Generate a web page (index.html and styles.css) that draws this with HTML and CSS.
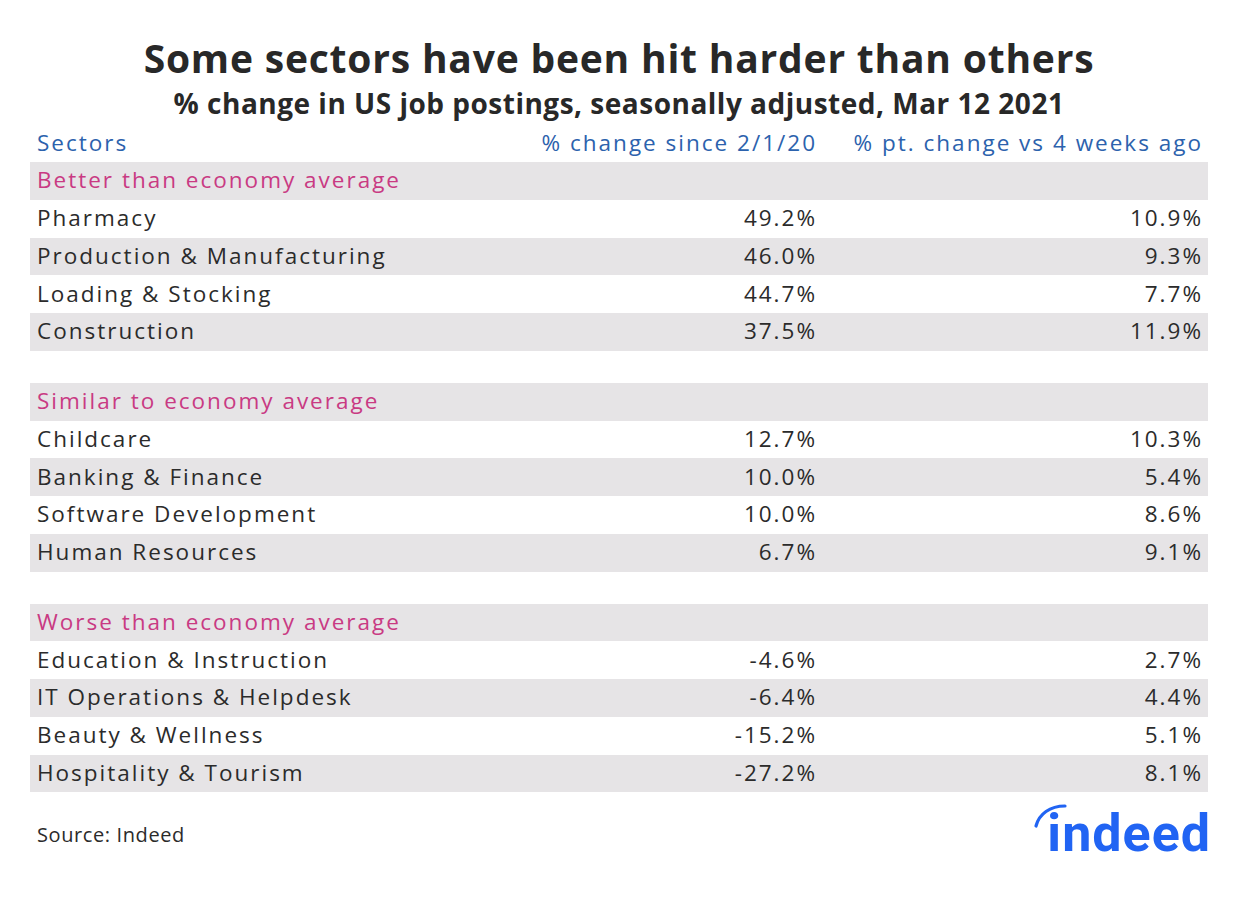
FILE: index.html
```html
<!DOCTYPE html>
<html>
<head>
<meta charset="utf-8">
<link rel="stylesheet" href="styles.css">
</head>
<body>
<div class="chart">
  <h1 class="title">Some sectors have been hit harder than others</h1>
  <h2 class="subtitle">% change in US job postings, seasonally adjusted, Mar 12 2021</h2>
  <div class="table">
    <div class="row head"><span>Sectors</span><span class="num">% change since 2/1/20</span><span class="num">% pt. change vs 4 weeks ago</span></div>

    <div class="row group shade"><span>Better than economy average</span><span></span><span></span></div>
    <div class="row"><span>Pharmacy</span><span class="num">49.2%</span><span class="num">10.9%</span></div>
    <div class="row shade"><span>Production &amp; Manufacturing</span><span class="num">46.0%</span><span class="num">9.3%</span></div>
    <div class="row"><span>Loading &amp; Stocking</span><span class="num">44.7%</span><span class="num">7.7%</span></div>
    <div class="row shade"><span>Construction</span><span class="num">37.5%</span><span class="num">11.9%</span></div>
    <div class="spacer"></div>

    <div class="row group shade"><span>Similar to economy average</span><span></span><span></span></div>
    <div class="row"><span>Childcare</span><span class="num">12.7%</span><span class="num">10.3%</span></div>
    <div class="row shade"><span>Banking &amp; Finance</span><span class="num">10.0%</span><span class="num">5.4%</span></div>
    <div class="row"><span>Software Development</span><span class="num">10.0%</span><span class="num">8.6%</span></div>
    <div class="row shade"><span>Human Resources</span><span class="num">6.7%</span><span class="num">9.1%</span></div>
    <div class="spacer"></div>

    <div class="row group shade"><span>Worse than economy average</span><span></span><span></span></div>
    <div class="row"><span>Education &amp; Instruction</span><span class="num">-4.6%</span><span class="num">2.7%</span></div>
    <div class="row shade"><span>IT Operations &amp; Helpdesk</span><span class="num">-6.4%</span><span class="num">4.4%</span></div>
    <div class="row"><span>Beauty &amp; Wellness</span><span class="num">-15.2%</span><span class="num">5.1%</span></div>
    <div class="row shade"><span>Hospitality &amp; Tourism</span><span class="num">-27.2%</span><span class="num">8.1%</span></div>
  </div>
  <div class="footer">
    <span class="source">Source: Indeed</span>
    <div class="logo"><span class="logo-i">i<svg class="arc" width="40" height="28" viewBox="0 0 40 28"><path d="M4 24 C 7 12, 18 4, 33 4" fill="none" stroke="#2164f3" stroke-width="3.2" stroke-linecap="round"/></svg></span>ndeed</div>
  </div>
</div>
</body>
</html>
```
FILE: styles.css
```css
html, body {
  margin: 0;
  padding: 0;
  background: #ffffff;
}
body {
  width: 1248px;
  height: 900px;
  font-family: "Open Sans", "Noto Sans", sans-serif;
  color: #2b2b2b;
}
.chart {
  padding: 32px 40px 0 30px;
}
.title {
  margin: 0;
  text-align: center;
  font-size: 39px;
  font-weight: 700;
  line-height: 52px;
  letter-spacing: 0.8px;
  color: #282828;
}
.subtitle {
  margin: 0;
  text-align: center;
  font-size: 28px;
  font-weight: 700;
  line-height: 38px;
  letter-spacing: 0.5px;
  color: #282828;
}
.table {
  margin-top: 2.25px;
}
.row {
  display: grid;
  grid-template-columns: 1fr 292px 386px;
  height: 37.75px;
  align-items: center;
  font-size: 22.5px;
  letter-spacing: 2px;
  padding-bottom: 2px;
  box-sizing: border-box;
}
.row > span {
  padding-left: 7px;
}
.row .num {
  text-align: right;
  padding-right: 5px;
}
.row.head {
  color: #2c62ad;
}
.shade {
  background: #e6e4e6;
}
.group {
  color: #c93a83;
}
.spacer {
  height: 32px;
}
.footer {
  display: flex;
  justify-content: space-between;
  align-items: flex-start;
}
.source {
  font-size: 20px;
  line-height: 28px;
  letter-spacing: 0.6px;
  margin-top: 29px;
  padding-left: 7px;
}
.logo {
  margin-top: 14px;
  margin-right: -3px;
  font-family: "Roboto", "Open Sans", sans-serif;
  font-weight: 700;
  font-size: 52px;
  line-height: 56px;
  letter-spacing: 1px;
  color: #2164f3;
}
.logo-i {
  position: relative;
}
.arc {
  position: absolute;
  left: -15px;
  top: -1px;
}
```
